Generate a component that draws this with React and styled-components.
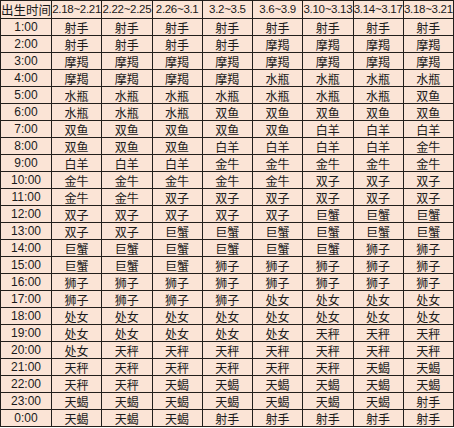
import React from "react";
import styled, { createGlobalStyle } from "styled-components";

const GlobalStyle = createGlobalStyle`
  html, body {
    margin: 0;
    padding: 0;
    background: #ffffff;
  }
`;

const Table = styled.table`
  width: 454px;
  border-collapse: collapse;
  table-layout: fixed;
  background: #fbe4d6;
  color: #1a1a1a;
  font-family: "Liberation Sans", "Noto Sans CJK SC", sans-serif;
  font-size: 12px;
`;

const Row = styled.tr`
  height: ${(p) => (p.$head ? "18px" : "17px")};
`;

const Cell = styled.td`
  border: 1px solid #231f1c;
  padding: 0;
  line-height: 15px;
  text-align: center;
  white-space: nowrap;
  overflow: hidden;
  font-weight: normal;
  font-family: ${(p) =>
    p.$cjk
      ? '"Noto Sans CJK SC", sans-serif'
      : '"Liberation Sans", "Noto Sans CJK SC", sans-serif'};
  font-size: ${(p) => p.$size || "12px"};
  letter-spacing: ${(p) => (p.$tight ? "-0.3px" : "0")};
`;

const FirstCol = styled.col`
  width: 51px;
`;

const dates = [
  "2.18~2.21",
  "2.22~2.25",
  "2.26~3.1",
  "3.2~3.5",
  "3.6~3.9",
  "3.10~3.13",
  "3.14~3.17",
  "3.18~3.21",
];

const rows = [
  ["1:00", "射手 射手 射手 射手 射手 射手 射手 射手"],
  ["2:00", "射手 射手 射手 射手 摩羯 摩羯 摩羯 摩羯"],
  ["3:00", "摩羯 摩羯 摩羯 摩羯 摩羯 摩羯 摩羯 摩羯"],
  ["4:00", "摩羯 摩羯 摩羯 摩羯 水瓶 水瓶 水瓶 水瓶"],
  ["5:00", "水瓶 水瓶 水瓶 水瓶 水瓶 水瓶 水瓶 双鱼"],
  ["6:00", "水瓶 水瓶 水瓶 双鱼 双鱼 双鱼 双鱼 双鱼"],
  ["7:00", "双鱼 双鱼 双鱼 双鱼 双鱼 白羊 白羊 白羊"],
  ["8:00", "双鱼 双鱼 双鱼 白羊 白羊 白羊 白羊 金牛"],
  ["9:00", "白羊 白羊 白羊 金牛 金牛 金牛 金牛 金牛"],
  ["10:00", "金牛 金牛 金牛 金牛 金牛 双子 双子 双子"],
  ["11:00", "金牛 金牛 双子 双子 双子 双子 双子 双子"],
  ["12:00", "双子 双子 双子 双子 双子 巨蟹 巨蟹 巨蟹"],
  ["13:00", "双子 双子 巨蟹 巨蟹 巨蟹 巨蟹 巨蟹 巨蟹"],
  ["14:00", "巨蟹 巨蟹 巨蟹 巨蟹 巨蟹 巨蟹 狮子 狮子"],
  ["15:00", "巨蟹 巨蟹 巨蟹 狮子 狮子 狮子 狮子 狮子"],
  ["16:00", "狮子 狮子 狮子 狮子 狮子 狮子 狮子 狮子"],
  ["17:00", "狮子 狮子 狮子 狮子 处女 处女 处女 处女"],
  ["18:00", "处女 处女 处女 处女 处女 处女 处女 处女"],
  ["19:00", "处女 处女 处女 处女 处女 天秤 天秤 天秤"],
  ["20:00", "处女 天秤 天秤 天秤 天秤 天秤 天秤 天秤"],
  ["21:00", "天秤 天秤 天秤 天秤 天秤 天秤 天蝎 天蝎"],
  ["22:00", "天秤 天秤 天蝎 天蝎 天蝎 天蝎 天蝎 天蝎"],
  ["23:00", "天蝎 天蝎 天蝎 天蝎 天蝎 天蝎 天蝎 射手"],
  ["0:00", "天蝎 天蝎 天蝎 射手 射手 射手 射手 射手"],
];

const App = () => {
  return (
    <>
      <GlobalStyle />
      <Table>
        <colgroup>
          <FirstCol />
        </colgroup>
        <thead>
          <Row $head>
            <Cell as="th" $cjk $size="12.5px">
              出生时间
            </Cell>
            {dates.map((d) => (
              <Cell as="th" key={d} $size="11.5px" $tight>
                {d}
              </Cell>
            ))}
          </Row>
        </thead>
        <tbody>
          {rows.map(([time, signs]) => (
            <Row key={time}>
              <Cell>{time}</Cell>
              {signs.split(" ").map((s, i) => (
                <Cell key={i} $cjk>
                  {s}
                </Cell>
              ))}
            </Row>
          ))}
        </tbody>
      </Table>
    </>
  );
};

export default App;
